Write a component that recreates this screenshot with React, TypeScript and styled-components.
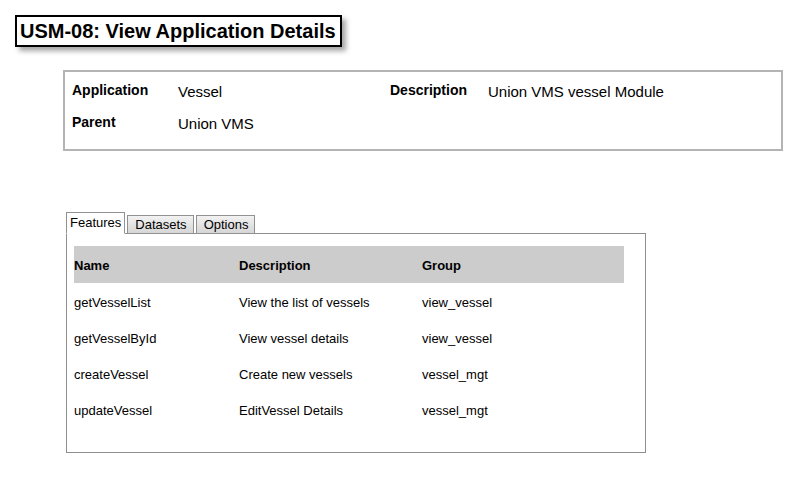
import styled, { createGlobalStyle } from 'styled-components';

const GlobalStyle = createGlobalStyle`
  body {
    margin: 8px;
    background: #ffffff;
    font-family: "Liberation Sans", Arial, sans-serif;
    color: #000;
  }
`;

const features = [
  { name: 'getVesselList', description: 'View the list of vessels', group: 'view_vessel' },
  { name: 'getVesselById', description: 'View vessel details', group: 'view_vessel' },
  { name: 'createVessel', description: 'Create new vessels', group: 'vessel_mgt' },
  { name: 'updateVessel', description: 'EditVessel Details', group: 'vessel_mgt' },
];

const tabs = ['Features', 'Datasets', 'Options'];

const App = () => {
  return (
    <Page>
      <GlobalStyle />
      <TitleBox>USM-08: View Application Details</TitleBox>

      <InfoBox>
        <InfoRow>
          <Label>Application</Label>
          <Value>Vessel</Value>
          <Label wide>Description</Label>
          <Value>Union VMS vessel Module</Value>
        </InfoRow>
        <InfoRow>
          <Label>Parent</Label>
          <Value>Union VMS</Value>
        </InfoRow>
      </InfoBox>

      <TabArea>
        <TabBar>
          {tabs.map((tab, index) => (
            <Tab key={tab} active={index === 0}>{tab}</Tab>
          ))}
        </TabBar>
        <TabPanel>
          <Table>
            <thead>
              <HeadRow>
                <HeadCell width={165}>Name</HeadCell>
                <HeadCell width={183}>Description</HeadCell>
                <HeadCell>Group</HeadCell>
              </HeadRow>
            </thead>
            <tbody>
              {features.map((feature) => (
                <BodyRow key={feature.name}>
                  <Cell>{feature.name}</Cell>
                  <Cell>{feature.description}</Cell>
                  <Cell>{feature.group}</Cell>
                </BodyRow>
              ))}
            </tbody>
          </Table>
        </TabPanel>
      </TabArea>
    </Page>
  );
};

const Page = styled.div`
  display: flex;
  flex-direction: column;
  align-items: flex-start;
`;

const TitleBox = styled.h1`
  margin: 7px 0 0 7px;
  padding: 3px 4px 2px 3px;
  border: 2px solid #000;
  font-size: 20px;
  font-weight: bold;
  line-height: 23px;
  box-shadow: 4px 4px 5px rgba(0, 0, 0, 0.35);
`;

const InfoBox = styled.div`
  box-sizing: border-box;
  width: 720px;
  height: 81px;
  margin: 23px 0 0 55px;
  padding: 9px 7px;
  border: 2px solid #b4b4b4;
  display: flex;
  flex-direction: column;
  gap: 13px;
`;

const InfoRow = styled.div`
  display: flex;
  align-items: flex-start;
  height: 19px;
  font-size: 15px;
`;

const Label = styled.span<{ wide?: boolean }>`
  font-weight: bold;
  font-size: 14px;
  line-height: 17px;
  padding-top: 1px;
  width: ${({ wide }) => (wide ? '98px' : '106px')};
`;

const Value = styled.span`
  width: 212px;
  line-height: 19px;
  padding-top: 1px;
  &:last-child {
    width: auto;
  }
`;

const TabArea = styled.div`
  margin: 61px 0 0 58px;
  width: 580px;
`;

const TabBar = styled.div`
  display: flex;
  align-items: flex-end;
  gap: 2px;
  height: 22px;
  margin-bottom: -1px;
  position: relative;
  z-index: 1;
`;

const Tab = styled.div<{ active?: boolean }>`
  box-sizing: border-box;
  height: ${({ active }) => (active ? '22px' : '19px')};
  padding: ${({ active }) => (active ? '2px 3px 0 3px' : '1px 6px 0 7px')};
  border: 1px solid #919191;
  border-bottom: ${({ active }) => (active ? '1px solid #fff' : '1px solid #919191')};
  background: ${({ active }) => (active ? '#fff' : 'linear-gradient(#f2f2f2, #d6d6d6)')};
  font-size: 13px;
  line-height: 16px;
`;

const TabPanel = styled.div`
  box-sizing: border-box;
  height: 220px;
  border: 1px solid #8e8e8e;
  padding: 12px 0 0 7px;
`;

const Table = styled.table`
  border-collapse: collapse;
  width: 550px;
  font-size: 13px;
`;

const HeadRow = styled.tr`
  background: #cccccc;
  height: 37px;
`;

const HeadCell = styled.th<{ width?: number }>`
  text-align: left;
  font-weight: bold;
  padding: 1px 0 0 0;
  width: ${({ width }) => (width ? `${width}px` : 'auto')};
`;

const BodyRow = styled.tr`
  height: 36px;
`;

const Cell = styled.td`
  padding: 3px 0 0 0;
`;

export default App;
